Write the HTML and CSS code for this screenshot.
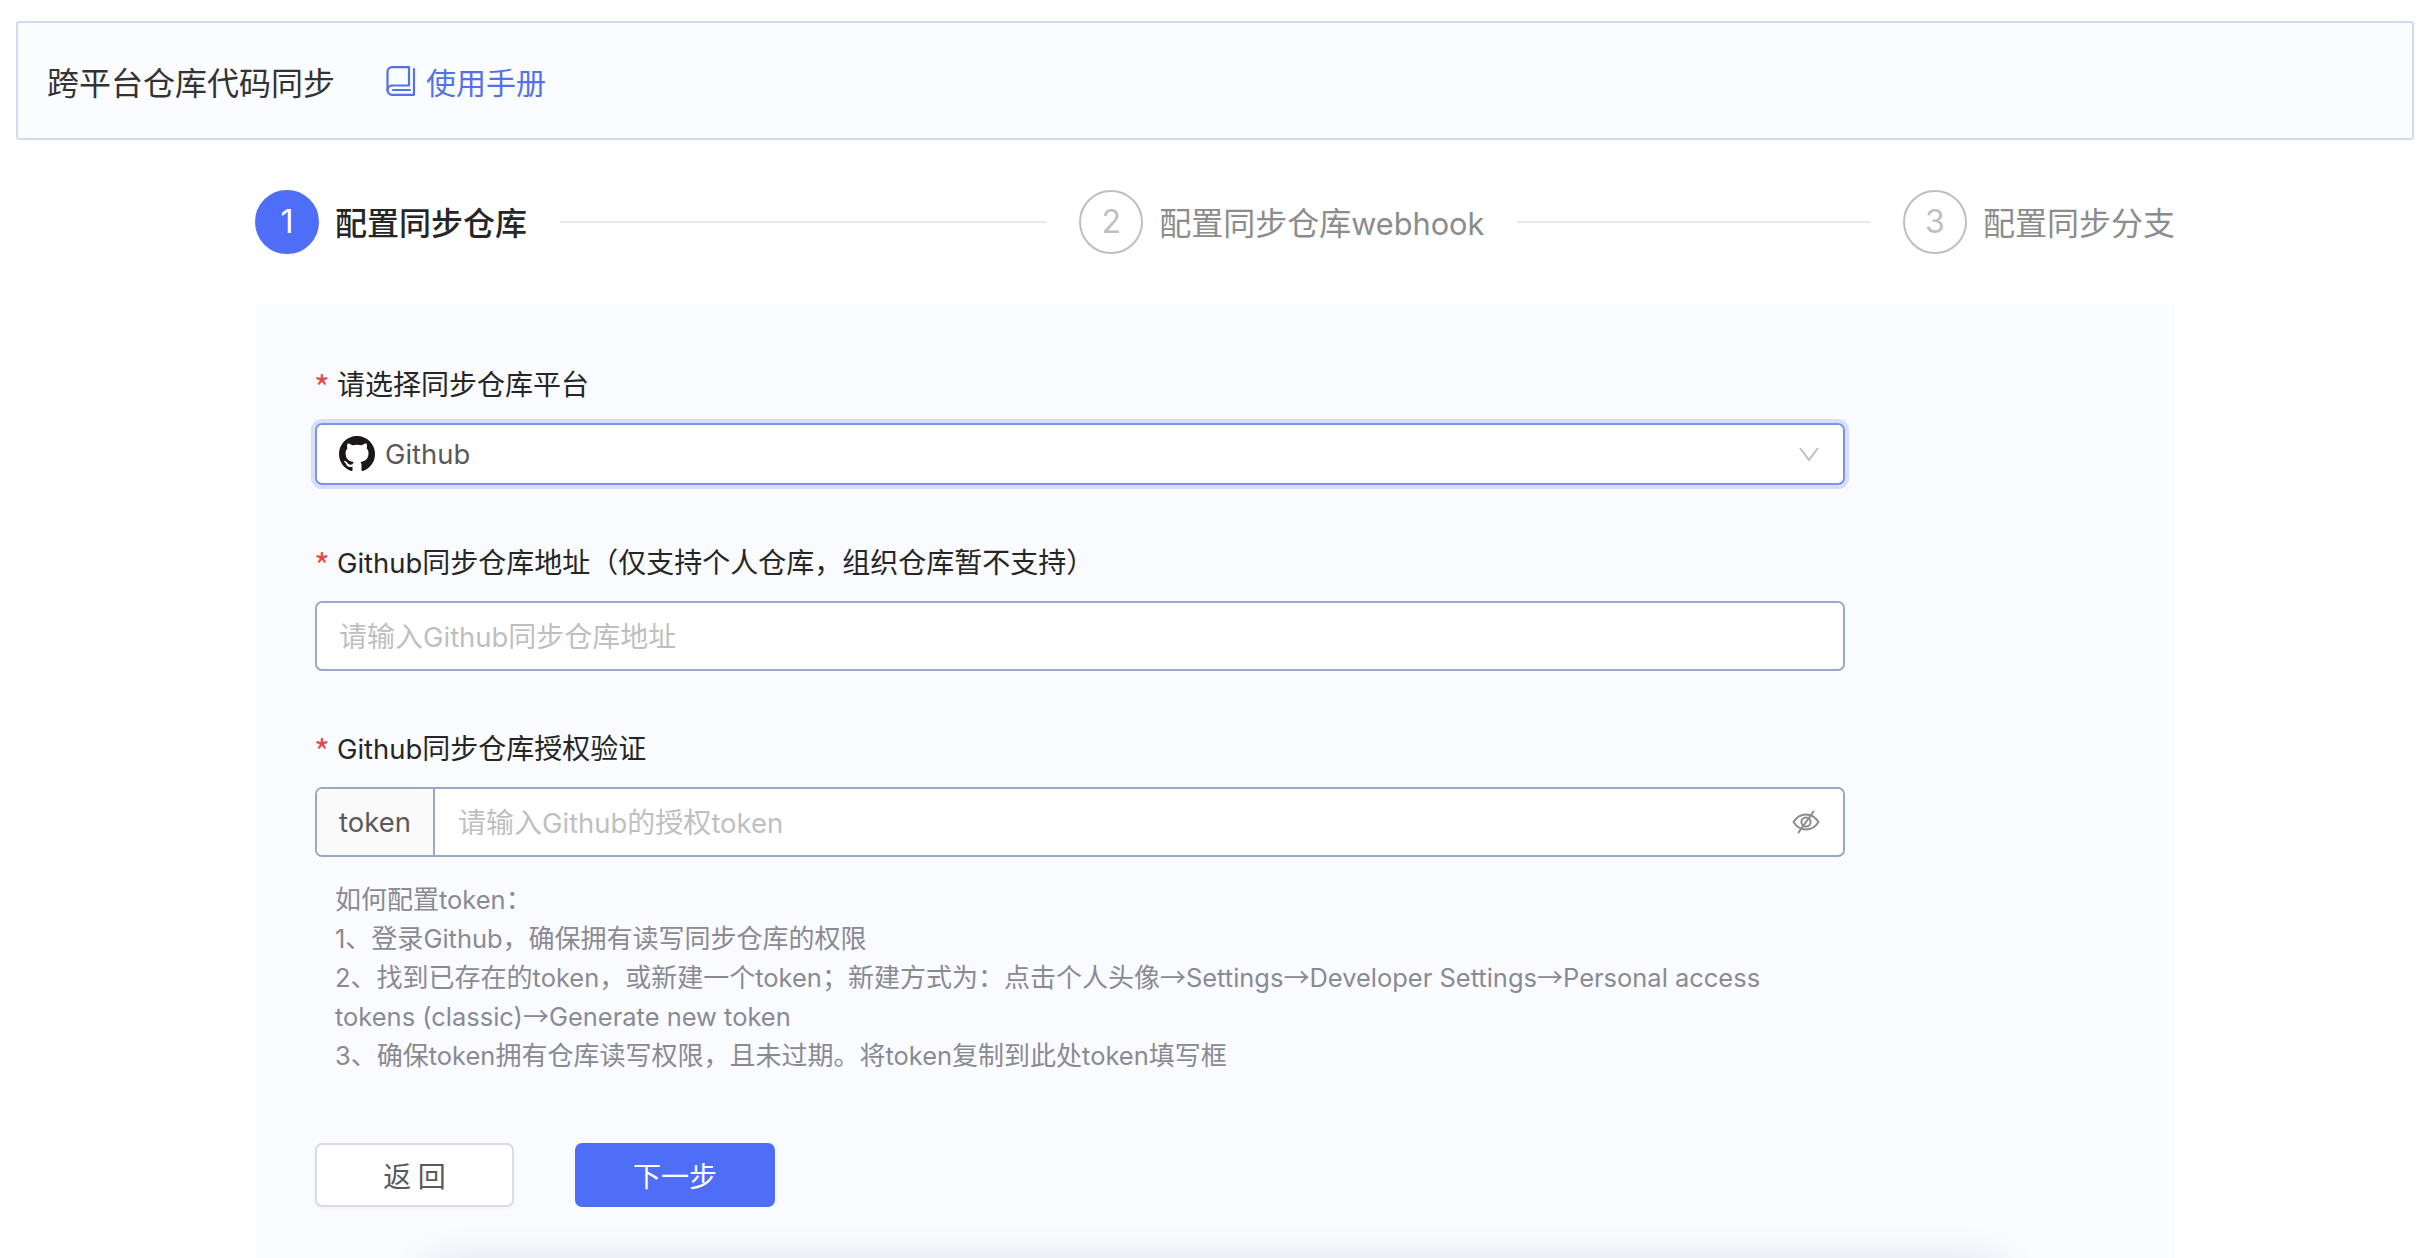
FILE: index.html
```html
<!DOCTYPE html>
<html lang="zh-CN">
<head>
<meta charset="utf-8">
<title>跨平台仓库代码同步</title>
<link rel="stylesheet" href="styles.css">
</head>
<body>
<header class="topbar">
  <h1 class="topbar-title">跨平台仓库代码同步</h1>
  <a class="manual-link">
    <svg class="book-icon" viewBox="0 0 30 30" fill="none" stroke="currentColor" stroke-width="2.2" stroke-linejoin="round" stroke-linecap="round">
      <path d="M6 19.5H23V1.2H6A4.5 4.5 0 0 0 1.5 5.7V24.3A4.5 4.5 0 0 0 6 28.8H28V3"/>
      <path d="M1.5 24A4.5 4.5 0 0 1 6 19.5"/>
      <path d="M7 24H24"/>
    </svg>
    <span>使用手册</span>
  </a>
</header>
<main class="content">
  <ol class="steps">
    <li class="step step-active"><span class="step-num en">1</span><span class="step-text">配置同步仓库</span></li>
    <li class="step-line step-line-long"></li>
    <li class="step"><span class="step-num en">2</span><span class="step-text">配置同步仓库<span class="en">webhook</span></span></li>
    <li class="step-line step-line-short"></li>
    <li class="step"><span class="step-num en">3</span><span class="step-text">配置同步分支</span></li>
  </ol>
  <section class="panel">
    <div class="field field-first">
      <label class="field-label"><span class="req">*</span>请选择同步仓库平台</label>
      <div class="control control-select">
        <svg class="gh-icon" viewBox="0 0 16 16" fill="#1b1718"><path d="M8 0C3.58 0 0 3.58 0 8c0 3.54 2.29 6.53 5.47 7.59.4.07.55-.17.55-.38 0-.19-.01-.82-.01-1.49-2.01.37-2.53-.49-2.69-.94-.09-.23-.48-.94-.82-1.13-.28-.15-.68-.52-.01-.53.63-.01 1.08.58 1.23.82.72 1.21 1.87.87 2.33.66.07-.52.28-.87.51-1.07-1.78-.2-3.64-.89-3.64-3.95 0-.87.31-1.59.82-2.15-.08-.2-.36-1.02.08-2.12 0 0 .67-.21 2.2.82.64-.18 1.32-.27 2-.27.68 0 1.36.09 2 .27 1.53-1.04 2.2-.82 2.2-.82.44 1.1.16 1.92.08 2.12.51.56.82 1.27.82 2.15 0 3.07-1.87 3.75-3.65 3.95.29.25.54.73.54 1.48 0 1.07-.01 1.93-.01 2.2 0 .21.15.46.55.38A8.013 8.013 0 0016 8c0-4.42-3.58-8-8-8z"/></svg>
        <span class="select-value en">Github</span>
        <svg class="chevron" viewBox="0 0 20 14" fill="none" stroke="#bfbfbf" stroke-width="2"><path d="M1 1L10 13L19 1"/></svg>
      </div>
    </div>
    <div class="field">
      <label class="field-label"><span class="req">*</span><span class="en">Github</span>同步仓库地址（仅支持个人仓库，组织仓库暂不支持）</label>
      <div class="control control-input"><span class="placeholder">请输入<span class="en">Github</span>同步仓库地址</span></div>
    </div>
    <div class="field">
      <label class="field-label"><span class="req">*</span><span class="en">Github</span>同步仓库授权验证</label>
      <div class="control control-group">
        <span class="addon en">token</span>
        <span class="placeholder group-placeholder">请输入<span class="en">Github</span>的授权<span class="en">token</span></span>
        <svg class="eye-icon" viewBox="0 0 28 24" fill="none" stroke="#8c8c8c" stroke-width="2" stroke-linecap="round">
          <path d="M1.5 12C5 6.5 9 4.5 14 4.5S23 6.5 26.5 12C23 17.5 19 19.5 14 19.5S5 17.5 1.5 12Z"/>
          <circle cx="14" cy="12" r="4.6"/>
          <path d="M21.5 1.5L6.5 22.5"/>
        </svg>
      </div>
      <div class="help">
        <p>如何配置<span class="en">token</span>：</p>
        <p><span class="en">1</span>、登录<span class="en">Github</span>，确保拥有读写同步仓库的权限</p>
        <p><span class="en">2</span>、找到已存在的<span class="en">token</span>，或新建一个<span class="en">token</span>；新建方式为：点击个人头像→<span class="en">Settings</span>→<span class="en">Developer Settings</span>→<span class="en">Personal access </span><span class="en">tokens (classic)</span>→<span class="en">Generate new token</span></p>
        <p><span class="en">3</span>、确保<span class="en">token</span>拥有仓库读写权限，且未过期。将<span class="en">token</span>复制到此处<span class="en">token</span>填写框</p>
      </div>
    </div>
    <div class="actions">
      <button class="btn btn-back">返 回</button>
      <button class="btn btn-next">下一步</button>
    </div>
  </section>
</main>
<div class="shadow-clip"><div class="bottom-shadow"></div></div>
</body>
</html>
```
FILE: styles.css
```css
* { box-sizing: border-box; }
html, body { height: 1258px; overflow: hidden; }
body {
  margin: 0;
  padding-top: 21px;
  background: #fff;
  font-family: "Noto Sans CJK SC", sans-serif;
  color: #262626;
  position: relative;
}
.en { font-family: Inter, "Noto Sans CJK SC", sans-serif; font-size: 0.98em; line-height: 0; }
.topbar {
  margin: 0 8px 0 16px;
  height: 119px;
  display: flex;
  align-items: center;
  padding-left: 29px;
  background: #fbfcff;
  border: 2px solid #cfdbf6;
  border-radius: 3px;
}
.topbar-title { margin: 0; font-size: 32px; font-weight: 400; color: #333; line-height: 1; }
.manual-link { display: flex; align-items: center; margin-left: 51px; color: #5472e8; font-size: 30px; line-height: 1; }
.book-icon { width: 30px; height: 30px; margin-right: 10px; }
.content { margin-left: 255px; width: 1920px; }
.steps {
  list-style: none;
  margin: 50px 0 0;
  padding: 0;
  height: 64px;
  display: flex;
  align-items: center;
}
.step { display: flex; align-items: center; flex: none; }
.step-num {
  width: 64px; height: 64px;
  display: flex; align-items: center; justify-content: center;
  border: 2px solid #bfbfbf;
  border-radius: 50%;
  color: #bfbfbf;
  font-size: 32px;
  margin-right: 16px;
}
.step-text { font-size: 32px; color: #8c8c8c; line-height: 1; padding-bottom: 2px; }
.step-text .en { font-size: 0.96em; }
.step-active .step-num { background: #4f6ef7; border-color: #4f6ef7; color: #fff; }
.step-active .step-text { color: #262626; font-weight: 500; }
.step-line { height: 2px; background: #e8e8e8; margin: 0 33px; }
.step-line-long { flex: 488; }
.step-line-short { flex: 354; }
.panel {
  margin-top: 50px;
  height: 954px;
  background: #fafbff;
  padding: 61px 0 0 60px;
}
.field { width: 1530px; margin-top: 58px; }
.field-first { margin-top: 0; }
.field-label {
  display: block;
  height: 40px;
  line-height: 37px;
  font-size: 28px;
  color: #262626;
  margin-bottom: 18px;
}
.req { display: inline-block; width: 23px; margin-left: -1px; color: #e5484d; font-size: 34px; line-height: 0; vertical-align: -6px; }
.control {
  display: flex;
  align-items: center;
  background: #fff;
  border: 2px solid #9aa7c6;
  border-radius: 7px;
  font-size: 28px;
}
.control-select {
  height: 62px;
  padding: 0 8px 0 22px;
  border-color: #7b93e8;
  box-shadow: 0 0 0 4px #d6defa;
}
.gh-icon { width: 36px; height: 36px; flex: none; }
.select-value { margin-left: 10px; color: #595959; flex: 1; line-height: 1.2; }
.chevron { width: 20px; height: 14px; margin-right: 16px; }
.control-input { height: 70px; padding-left: 22px; }
.placeholder { color: #bfbfbf; padding-bottom: 3px; }
.control-group { height: 70px; overflow: hidden; }
.addon {
  width: 118px;
  height: 100%;
  display: flex; align-items: center; justify-content: center;
  background: #fafafa;
  border-right: 2px solid #9aa7c6;
  color: #595959;
  flex: none;
}
.group-placeholder { margin-left: 23px; flex: 1; }
.eye-icon { width: 28px; height: 24px; margin-right: 23px; }
.help { padding: 21px 20px 0; font-size: 26px; line-height: 39px; color: #8a8a93; }
.help p { margin: 0; }
.actions { margin-top: 70px; display: flex; gap: 61px; }
.btn {
  width: 199px;
  height: 64px;
  border-radius: 7px;
  font-family: inherit;
  font-size: 28px;
  padding: 0;
}
.btn-back { background: #fff; border: 2px solid #dcdcdc; color: #595959; box-shadow: 0 2px 4px rgba(0,0,0,.03); }
.btn-next { background: #4f6ef7; border: 0; color: #fff; width: 200px; }
.shadow-clip {
  position: absolute;
  left: 0;
  right: 0;
  bottom: 0;
  height: 60px;
  overflow: hidden;
}
.bottom-shadow {
  margin: 70px 0 0 430px;
  width: 1570px;
  height: 60px;
  border-radius: 8px;
  box-shadow: 0 0 44px rgba(20, 25, 50, .16);
}
```
